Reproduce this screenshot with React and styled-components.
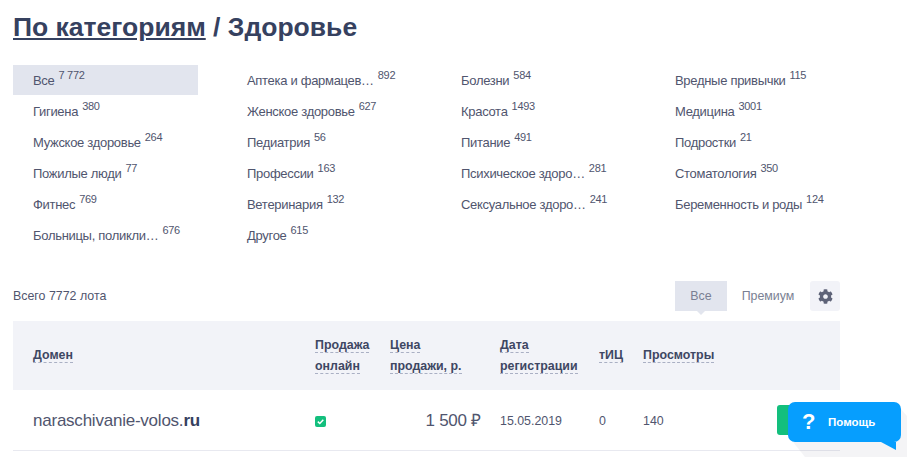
import React from "react";
import styled, { createGlobalStyle } from "styled-components";
import { FaCog } from "react-icons/fa";

const GlobalStyle = createGlobalStyle`
  html, body {
    margin: 0;
    padding: 0;
    height: 468px;
    overflow: hidden;
    background: #fff;
    font-family: "Liberation Sans", Arial, sans-serif;
    color: #50556e;
  }
`;

const categories = [
  ["Все", "7 772", true],
  ["Аптека и фармацев…", "892"],
  ["Болезни", "584"],
  ["Вредные привычки", "115"],
  ["Гигиена", "380"],
  ["Женское здоровье", "627"],
  ["Красота", "1493"],
  ["Медицина", "3001"],
  ["Мужское здоровье", "264"],
  ["Педиатрия", "56"],
  ["Питание", "491"],
  ["Подростки", "21"],
  ["Пожилые люди", "77"],
  ["Профессии", "163"],
  ["Психическое здоро…", "281"],
  ["Стоматология", "350"],
  ["Фитнес", "769"],
  ["Ветеринария", "132"],
  ["Сексуальное здоро…", "241"],
  ["Беременность и роды", "124"],
  ["Больницы, поликли…", "676"],
  ["Другое", "615"]
];

const Page = styled.div`
  width: 827px;
  padding-left: 13px;
`;

const Title = styled.h1`
  margin: 0;
  padding-top: 12px;
  font-size: 26.5px;
  line-height: 30px;
  font-weight: 700;
  color: #36415f;

  a {
    color: inherit;
    text-decoration: underline;
  }
`;

const CategoryGrid = styled.div`
  display: grid;
  grid-template-columns: repeat(4, 214px);
  grid-auto-rows: 31px;
  margin-top: 23px;
  width: 856px;
`;

const Category = styled.div`
  width: 185px;
  height: 30px;
  padding-left: 20px;
  box-sizing: border-box;
  font-size: 13px;
  letter-spacing: -0.3px;
  line-height: 32px;
  white-space: nowrap;
  background: ${p => (p.$active ? "#e2e5ee" : "transparent")};
`;

const Count = styled.sup`
  font-size: 11px;
  letter-spacing: -0.3px;
  line-height: 0;
  margin-left: 4px;
  vertical-align: 6px;
`;

const Toolbar = styled.div`
  display: flex;
  align-items: center;
  justify-content: space-between;
  margin-top: 30px;
  height: 30px;
  font-size: 12.4px;
`;

const Tabs = styled.div`
  display: flex;
  align-items: center;
`;

const Tab = styled.div`
  position: relative;
  width: ${p => p.$w}px;
  height: 30px;
  line-height: 30px;
  text-align: center;
  color: #7a7f93;
  background: ${p => (p.$active ? "#e2e5ee" : "transparent")};

  ${p =>
    p.$active &&
    `&:after {
      content: "";
      position: absolute;
      left: 50%;
      bottom: -4px;
      margin-left: -4px;
      border-left: 4px solid transparent;
      border-right: 4px solid transparent;
      border-top: 4px solid #e2e5ee;
    }`}
`;

const GearButton = styled.div`
  display: flex;
  align-items: center;
  justify-content: center;
  width: 30px;
  height: 30px;
  margin-left: 1px;
  border-radius: 3px;
  background: #f2f3f8;
  color: #5e6378;
  font-size: 15px;
`;

const TableGrid = styled.div`
  display: grid;
  grid-template-columns: 282px 75px 110px 99px 44px 1fr;
  padding-left: 20px;
  align-items: center;
`;

const HeadRow = styled(TableGrid)`
  margin-top: 10px;
  height: 69px;
  background: #f2f3f8;
`;

const HeadCell = styled.div`
  font-size: 12.4px;
  font-weight: 700;
  line-height: 21px;
  color: #3e4763;

  span {
    border-bottom: 1px dashed #aab0c4;
  }
`;

const BodyRow = styled(TableGrid)`
  position: relative;
  height: 58px;
  padding-top: 2px;
  border-bottom: 1px solid #e8e9f0;
  font-size: 12.4px;
`;

const Domain = styled.div`
  font-size: 17px;
  letter-spacing: -0.23px;

  b {
    color: #36415f;
  }
`;

const Check = styled.svg`
  display: block;
  width: 11px;
  height: 11px;
`;

const Price = styled.div`
  width: 91px;
  text-align: right;
  font-size: 17px;
  letter-spacing: -0.25px;
  margin-top: -3px;
`;

const BuyButton = styled.div`
  position: absolute;
  left: 764px;
  top: 15px;
  width: 50px;
  height: 30px;
  border-radius: 3px;
  background: #13bf7d;
`;

const HelpShadow = styled.svg`
  position: absolute;
  left: 787px;
  top: 402px;
  width: 120px;
  height: 66px;
`;

const HelpBubble = styled.div`
  position: absolute;
  left: 788px;
  top: 402px;
  display: flex;
  align-items: center;
  width: 113px;
  height: 40px;
  border-radius: 7px;
  background: #069efe;
  color: #fff;
  font-size: 11.5px;
  font-weight: 700;

  &:after {
    content: "";
    position: absolute;
    right: 5px;
    bottom: -8px;
    border-top: 8px solid #069efe;
    border-left: 15px solid transparent;
  }
`;

const HelpMark = styled.span`
  width: 40px;
  padding-left: 14px;
  box-sizing: border-box;
  font-size: 22px;
`;

export default function App() {
  return (
    <>
      <GlobalStyle />
      <Page>
        <Title>
          <a href="#cat">По категориям</a> / Здоровье
        </Title>
        <CategoryGrid>
          {categories.map(([name, count, active]) => (
            <Category key={name} $active={active}>
              {name}
              <Count>{count}</Count>
            </Category>
          ))}
        </CategoryGrid>
        <Toolbar>
          <span>Всего 7772 лота</span>
          <Tabs>
            <Tab $active $w={52}>Все</Tab>
            <Tab $w={82}>Премиум</Tab>
            <GearButton>
              <FaCog />
            </GearButton>
          </Tabs>
        </Toolbar>
        <HeadRow>
          <HeadCell><span>Домен</span></HeadCell>
          <HeadCell><span>Продажа</span><br /><span>онлайн</span></HeadCell>
          <HeadCell><span>Цена</span><br /><span>продажи, р.</span></HeadCell>
          <HeadCell><span>Дата</span><br /><span>регистрации</span></HeadCell>
          <HeadCell><span>тИЦ</span></HeadCell>
          <HeadCell><span>Просмотры</span></HeadCell>
        </HeadRow>
        <BodyRow>
          <Domain>naraschivanie-volos.<b>ru</b></Domain>
          <Check viewBox="0 0 11 11">
            <rect width="11" height="11" rx="2" fill="#13bf7d" />
            <path d="M2.8 5.6 4.8 7.5 8.3 3.8" fill="none" stroke="#fff" strokeWidth="1.5" />
          </Check>
          <Price>1 500 ₽</Price>
          <div>15.05.2019</div>
          <div>0</div>
          <div>140</div>
          <BuyButton />
        </BodyRow>
      </Page>
      <HelpShadow viewBox="0 0 120 66">
        <polygon points="6,40 18,55 120,55 120,14 113,6" fill="#3c3c6e" fillOpacity="0.06" />
      </HelpShadow>
      <HelpBubble>
        <HelpMark>?</HelpMark>
        Помощь
      </HelpBubble>
    </>
  );
}
